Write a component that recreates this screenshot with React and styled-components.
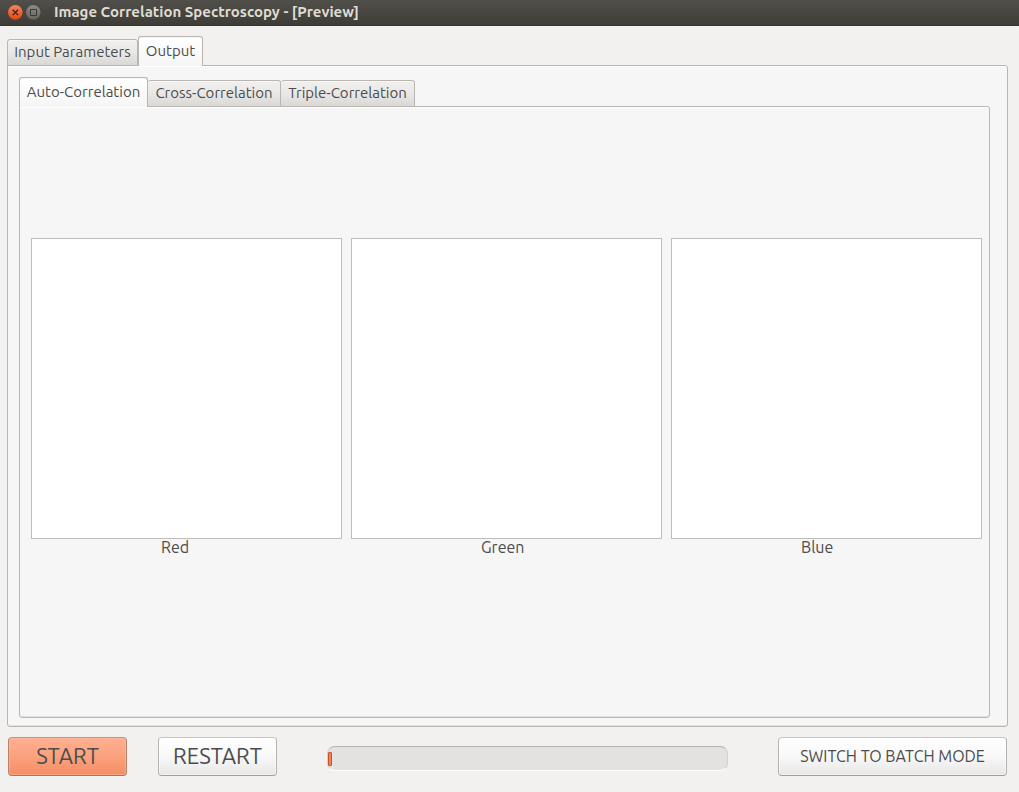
import React, { useState } from "react";
import styled, { createGlobalStyle, css } from "styled-components";

const GlobalStyle = createGlobalStyle`
  *, *::before, *::after { box-sizing: border-box; }
  body {
    margin: 0;
    background: #f2f1f0;
    color: #4c4c4c;
    font-family: Ubuntu, "Noto Sans", "Open Sans", sans-serif;
    font-size: 15px;
  }
  button { font-family: inherit; color: inherit; }
`;

const Window = styled.div`
  display: flex;
  flex-direction: column;
  min-height: 100vh;
`;

const TitleBar = styled.header`
  display: flex;
  align-items: center;
  flex: none;
  gap: 2px;
  height: 26px;
  padding: 0 7px 1px;
  background: linear-gradient(#504f49, #3d3c37);
  border-bottom: 1px solid #33322e;
`;

const WindowButton = styled.button`
  display: flex;
  width: 16px;
  height: 16px;
  padding: 0;
  border: 0;
  background: none;
`;

const Title = styled.h1`
  margin: 0 0 0 11px;
  font-size: 15px;
  line-height: 20px;
  font-weight: 700;
  color: #dfdbd2;
  white-space: nowrap;
`;

const Content = styled.main`
  display: flex;
  flex: 1;
  flex-direction: column;
  padding: 10px 11px 16px 7px;
`;

const TabGroup = styled.section`
  display: flex;
  flex: 1;
  flex-direction: column;
`;

const TabList = styled.div`
  display: flex;
  align-items: flex-end;
  height: 30px;
  position: relative;
  z-index: 1;
  margin-bottom: -1px;
`;

const Tab = styled.button`
  flex: none;
  width: ${(p) => p.$width}px;
  height: 27px;
  padding: 0 0 2px;
  border: 1px solid #b9b6b1;
  border-left-width: ${(p) => (p.$first || p.$active ? 1 : 0)}px;
  border-radius: 3px 3px 0 0;
  background: linear-gradient(#f1f0ef, #e9e8e6 50%, #dad8d5);
  box-shadow: inset 0 1px #f7f6f5;
  font-size: 15px;
  line-height: 20px;
  white-space: nowrap;
  ${(p) =>
    p.$active &&
    css`
      height: 30px;
      border-bottom: 0;
      background: linear-gradient(#ffffff, #f5f5f5);
    `}
`;

const Pane = styled.div`
  display: flex;
  flex: 1;
  flex-direction: column;
  border: 1px solid #b9b6b1;
  border-radius: 0 3px 3px 3px;
  background: #f6f6f6;
  box-shadow: inset 0 1px #ffffff, inset 0 -1px #e3e2e1;
  padding: ${(p) => (p.$nested ? "0 7px 32px 11px" : "11px 17px 8px 11px")};
`;

const Plots = styled.div`
  display: grid;
  grid-template-columns: repeat(3, 1fr);
  gap: 9px;
  margin: auto 0;
`;

const Plot = styled.figure`
  margin: 0;
`;

const Canvas = styled.div`
  height: 301px;
  border: 1px solid #bfbdba;
  background: #ffffff;
`;

const Caption = styled.figcaption`
  padding-left: 130px;
  font-size: 16px;
  line-height: 16px;
`;

const Footer = styled.footer`
  display: flex;
  align-items: center;
  margin-top: 10px;
  padding: 0 1px;
`;

const ActionButton = styled.button`
  flex: none;
  width: ${(p) => (p.$wide ? 229 : 119)}px;
  height: 39px;
  padding: 0 0 1px;
  border: 1px solid;
  border-color: #c8c6c4 #b5b3b0 #a09e9b;
  border-radius: 4px;
  background: linear-gradient(#ffffff, #f8f8f8 50%, #e8e7e6);
  box-shadow: inset 0 0 0 1px rgba(255, 255, 255, 0.5);
  font-size: ${(p) => (p.$wide ? 16 : 22)}px;
  line-height: 26px;
  white-space: nowrap;
  ${(p) =>
    p.$primary &&
    css`
      border-color: #c8917a #b5826c #a8745d;
      background: linear-gradient(#ffb091, #fba17d 50%, #f48e66);
      box-shadow: inset 0 0 0 1px rgba(255, 190, 160, 0.5);
    `}
`;

const RestartSlot = styled.div`
  margin-left: 31px;
`;

const Progress = styled.progress`
  appearance: none;
  flex: 1;
  min-width: 0;
  height: 25px;
  margin: 3px 50px 0;
  padding: 5px 1px 4px 0;
  border: 1px solid #d2d0ce;
  border-top-color: #b5b3ae;
  border-bottom-color: #ffffff;
  border-radius: 8px;
  background: #e3e2e0;

  &::-webkit-progress-bar { background: transparent; }
  &::-webkit-progress-value {
    border: 1px solid #c8512a;
    border-radius: 1px;
    background: #f58159;
  }
`;

const CloseIcon = () => (
  <svg width="16" height="16" viewBox="0 0 16 16" aria-hidden="true">
    <defs>
      <linearGradient id="closeFill" x2="0" y2="1">
        <stop stopColor="#f58660" />
        <stop offset="1" stopColor="#dd4814" />
      </linearGradient>
    </defs>
    <circle cx="8.3" cy="8.3" r="7.6" fill="url(#closeFill)" stroke="#34332e" strokeWidth=".4" />
    <path d="M5.7 5.7l5.4 5.4M11.1 5.7l-5.4 5.4" stroke="#3c2018" strokeWidth="1.3" />
  </svg>
);

const MaximizeIcon = () => (
  <svg width="16" height="16" viewBox="0 0 16 16" aria-hidden="true">
    <defs>
      <linearGradient id="maxFill" x2="0" y2="1">
        <stop stopColor="#8f8d84" />
        <stop offset="1" stopColor="#65645d" />
      </linearGradient>
    </defs>
    <circle cx="8.3" cy="8.3" r="7.6" fill="url(#maxFill)" stroke="#34332e" strokeWidth=".4" />
    <path d="M5.5 5.5h6v6h-6z" fill="none" stroke="#3a3934" />
  </svg>
);

const MAIN_TABS = [
  { name: "Input Parameters", width: 131 },
  { name: "Output", width: 65 },
];
const RESULT_TABS = [
  { name: "Auto-Correlation", width: 129 },
  { name: "Cross-Correlation", width: 133 },
  { name: "Triple-Correlation", width: 134 },
];
const CHANNELS = ["Red", "Green", "Blue"];

function Tabs({ label, tabs, initial, nested, children }) {
  const [active, setActive] = useState(initial);
  return (
    <TabGroup>
      <TabList role="tablist" aria-label={label}>
        {tabs.map((tab, i) => (
          <Tab
            key={tab.name}
            type="button"
            role="tab"
            aria-selected={active === i}
            $active={active === i}
            $first={i === 0}
            $width={tab.width}
            onClick={() => setActive(i)}
          >
            {tab.name}
          </Tab>
        ))}
      </TabList>
      <Pane role="tabpanel" aria-label={tabs[active].name} $nested={nested}>
        {active === initial && children}
      </Pane>
    </TabGroup>
  );
}

export default function App() {
  return (
    <Window>
      <GlobalStyle />
      <TitleBar>
        <WindowButton type="button" aria-label="Close"><CloseIcon /></WindowButton>
        <WindowButton type="button" aria-label="Maximize"><MaximizeIcon /></WindowButton>
        <Title>Image Correlation Spectroscopy - [Preview]</Title>
      </TitleBar>
      <Content>
        <Tabs label="Sections" tabs={MAIN_TABS} initial={1}>
          <Tabs label="Correlation" tabs={RESULT_TABS} initial={0} nested>
            <Plots>
              {CHANNELS.map((name) => (
                <Plot key={name}>
                  <Canvas />
                  <Caption>{name}</Caption>
                </Plot>
              ))}
            </Plots>
          </Tabs>
        </Tabs>
        <Footer>
          <ActionButton type="button" $primary>START</ActionButton>
          <RestartSlot>
            <ActionButton type="button">RESTART</ActionButton>
          </RestartSlot>
          <Progress aria-label="Progress" max="100" value="1" />
          <ActionButton type="button" $wide>SWITCH TO BATCH MODE</ActionButton>
        </Footer>
      </Content>
    </Window>
  );
}
